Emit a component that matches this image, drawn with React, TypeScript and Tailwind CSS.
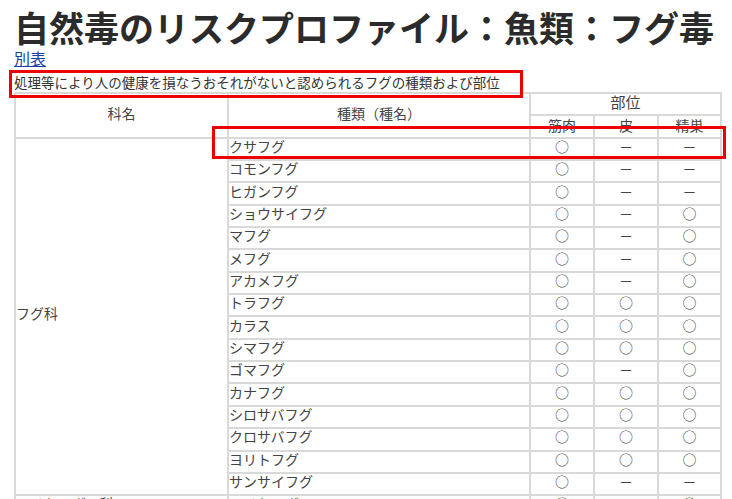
import React from 'react';

const F = '"Noto Sans CJK JP", "Noto Sans", sans-serif';

const O = '○';
const D = '－';

const rows: [string, string, string, string][] = [
  ['クサフグ', O, D, D],
  ['コモンフグ', O, D, D],
  ['ヒガンフグ', O, D, D],
  ['ショウサイフグ', O, D, O],
  ['マフグ', O, D, O],
  ['メフグ', O, D, O],
  ['アカメフグ', O, D, O],
  ['トラフグ', O, O, O],
  ['カラス', O, O, O],
  ['シマフグ', O, O, O],
  ['ゴマフグ', O, D, O],
  ['カナフグ', O, O, O],
  ['シロサバフグ', O, O, O],
  ['クロサバフグ', O, O, O],
  ['ヨリトフグ', O, O, O],
  ['サンサイフグ', O, D, D],
];

const th = 'border-2 border-[#d9d9d9] h-[22.35px] p-0 pb-[4px] leading-[14px] font-normal text-center';
const td = 'border-2 border-[#d9d9d9] h-[22.35px] p-0 pb-[6px] leading-[14px]';

export default function App() {
  return (
    <div className="relative bg-white text-[#333] pl-[14px] min-h-[499px]" style={{ fontFamily: F }}>
      <h1 className="text-[35px] font-bold leading-[40px] pt-[7px] text-[#2b2b2b]">
        自然毒のリスクプロファイル：魚類：フグ毒
      </h1>
      <a href="#" className="block w-fit text-[16px] leading-[20px] mt-[1px] text-[#1a3fa8] underline">
        別表
      </a>
      <p className="text-[13.5px] leading-[18px] mt-[5px] mb-[1px] text-[#333]">
        処理等により人の健康を損なうおそれがないと認められるフグの種類および部位
      </p>
      <table className="border-collapse border-2 border-[#d9d9d9] text-[14px] text-[#444]">
        <colgroup>
          <col className="w-[213px]" />
          <col className="w-[302px]" />
          <col className="w-[64px]" />
          <col className="w-[64px]" />
          <col className="w-[63px]" />
        </colgroup>
        <thead>
          <tr>
            <th rowSpan={2} className={th}>科名</th>
            <th rowSpan={2} className={th}>種類（種名）</th>
            <th colSpan={3} className={`${th} text-[15px]`}>部位</th>
          </tr>
          <tr>
            <th className={th}>筋肉</th>
            <th className={th}>皮</th>
            <th className={th}>精巣</th>
          </tr>
        </thead>
        <tbody>
          {rows.map((r, i) => (
            <tr key={r[0]}>
              {i === 0 && (
                <td rowSpan={rows.length} className={`${td} align-middle text-left`}>
                  フグ科
                </td>
              )}
              <td className={`${td} text-left`}>{r[0]}</td>
              <td className={`${td} text-center`}>{r[1]}</td>
              <td className={`${td} text-center`}>{r[2]}</td>
              <td className={`${td} text-center`}>{r[3]}</td>
            </tr>
          ))}
          <tr>
            <td className={`${td} text-left`}>ハリセンボン科</td>
            <td className={`${td} text-left`}>ハリセンボン</td>
            <td className={`${td} text-center`}>{O}</td>
            <td className={`${td} text-center`}>{D}</td>
            <td className={`${td} text-center`}>{O}</td>
          </tr>
        </tbody>
      </table>

      {/* annotation boxes */}
      <div className="absolute left-[9px] top-[70px] w-[514px] h-[28px] border-[3px] border-[#ee0000]" />
      <div className="absolute left-[212px] top-[126px] w-[514px] h-[33px] border-[3px] border-[#ee0000]" />
    </div>
  );
}
